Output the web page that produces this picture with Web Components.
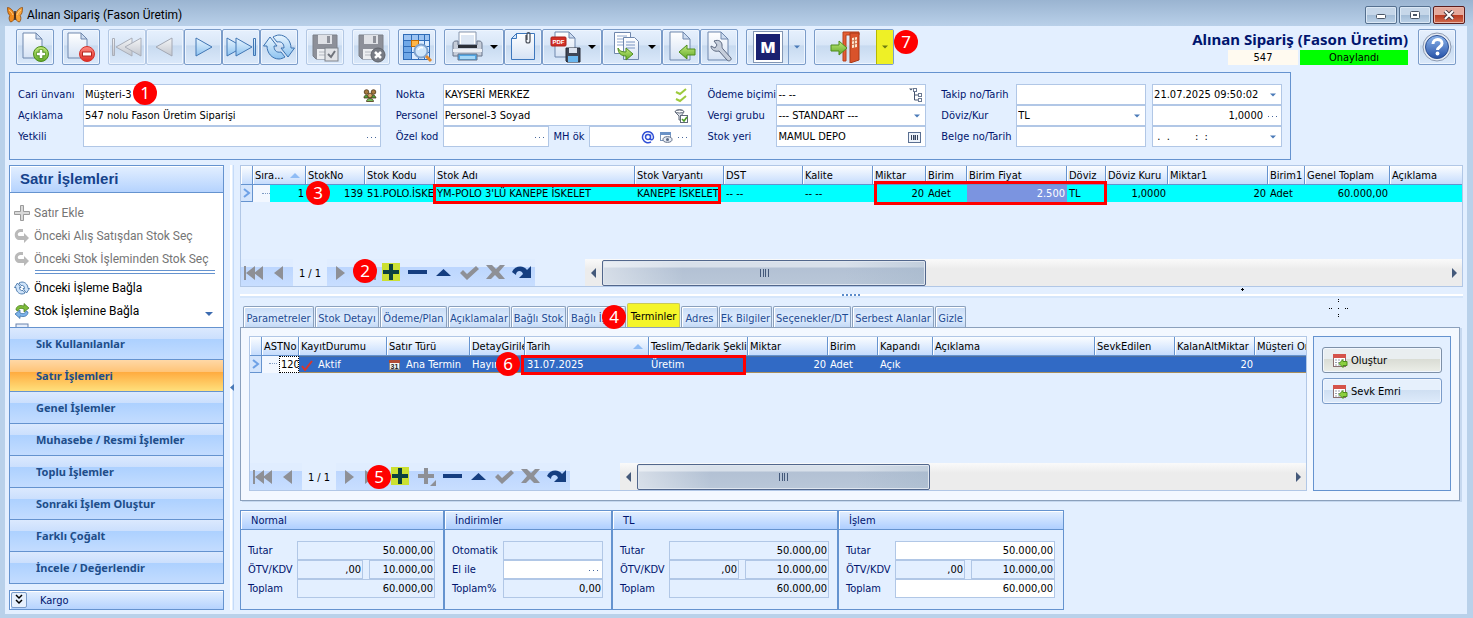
<!DOCTYPE html>
<html lang="tr">
<head>
<meta charset="utf-8">
<title>Alınan Sipariş (Fason Üretim)</title>
<style>
  body { margin: 0; background: #b9d1ea; }
</style>
</head>
<body>
<order-window></order-window>
<script>
const BASE = `
  *, *::before, *::after { box-sizing: border-box; }
  button, input, select { font: inherit; color: inherit; margin: 0; padding: 0; border: 0; background: none; border-radius: 0; outline: none; }
  button { cursor: default; }
  svg { display: block; }
`;
const define = (tag, css, render) => customElements.define(tag, class extends HTMLElement {
  constructor() {
    super();
    this.attachShadow({ mode: 'open' });
  }
  connectedCallback() {
    this.shadowRoot.innerHTML = `<style>${BASE}${css}</style>${render(this)}`;
  }
});
const attr = (el, name, fallback = '') => el.getAttribute(name) ?? fallback;

/* ---------- icons ---------- */
const grad = (id, a, b) => `<linearGradient id="${id}" x1="0" y1="0" x2="0" y2="1"><stop offset="0" stop-color="${a}"/><stop offset="1" stop-color="${b}"/></linearGradient>`;
const page = (x, y, w, h, f = 6) => `<path d="M${x} ${y}h${w - f}l${f} ${f}v${h - f}h${-w}z" fill="url(#pg)" stroke="#6f87ad"/><path d="M${x + w - f} ${y}v${f}h${f}z" fill="#cddcf0" stroke="#6f87ad" stroke-linejoin="round"/>`;
const pg = `<defs>${grad('pg', '#ffffff', '#d5e2f4')}${grad('bl', '#eaf6ff', '#8cc2f0')}${grad('gr', '#f4f5f7', '#c2c6ce')}${grad('gn', '#c3ea7c', '#5fa826')}${grad('rd', '#ff8d84', '#e02a22')}</defs>`;
const floppy = (c, d) => `<path d="M2 2h24v24H5l-3-3z" fill="${c}" stroke="${d}"/><rect x="7" y="2" width="14" height="9" fill="#dfe1e6"/><rect x="16" y="3" width="3" height="7" fill="${c}"/><rect x="6" y="16" width="16" height="10" fill="#eceef1"/><path d="M8 19h12M8 22h12" stroke="#b4b8c0"/>`;
const ICONS = {
  butterfly: [16, `<path d="M7.500 7C6 3 3 .5.500.500c0 4 .5 7 2.500 8-1.500 1.500-1 5 .5 6.500C6 15 7.500 12 7.500 9.500z" fill="#f08a1c" stroke="#8a4a12" stroke-width=".8"/><path d="M8.500 7C10 3 13 .5 15.500.500c0 4-.5 7-2.500 8 1.500 1.500 1 5-.5 6.500C10 15 8.500 12 8.500 9.500z" fill="#f7a338" stroke="#8a4a12" stroke-width=".8"/><path d="M2 3c2 1 3 3 4 5M14 3c-2 1-3 3-4 5" stroke="#ffd08a" fill="none"/><path d="M8 4v9" stroke="#3a2010" stroke-width="1.500"/>`],
  docAdd: [32, pg + page(4, 2, 19, 25) + `<circle cx="22" cy="23" r="7.500" fill="url(#gn)" stroke="#4b8a1c"/><path d="M22 18.500v9M17.500 23h9" stroke="#4b8a1c" stroke-width="4.600"/><path d="M22 19v8M18 23h8" stroke="#fff" stroke-width="2.600"/>`],
  docDel: [32, pg + page(3, 2, 19, 25) + `<circle cx="22" cy="23" r="7.500" fill="url(#rd)" stroke="#d3322b"/><rect x="17.500" y="21" width="9" height="4" fill="#fff" stroke="#b32720"/>`],
  first: [32, pg + `<g fill="url(#gr)" stroke="#a9aeb9" stroke-linejoin="round"><path d="M1.500 7.500h2v17h-2z"/><path d="M21 7v18L5 16z"/><path d="M30 7v18l-16-9z"/></g>`],
  prev: [32, pg + `<path d="M23 7v18L7 16z" fill="url(#gr)" stroke="#a3a8b4" stroke-linejoin="round"/>`],
  next: [32, pg + `<path d="M9 7v18l16-9z" fill="url(#bl)" stroke="#4176b4" stroke-linejoin="round"/>`],
  last: [32, pg + `<g fill="url(#bl)" stroke="#4176b4" stroke-linejoin="round"><path d="M2 7v18l16-9z"/><path d="M11 7v18l16-9z"/><path d="M28.500 7.500h2v17h-2z"/></g>`],
  refresh: [32, pg + `<g fill="url(#bl)" stroke="#3c72b0" stroke-linejoin="round"><path d="M7 6l-6.500 9H4c0 7 5 13 12 13 2 0 4-1 6-2l-4-5c-5 1-7-2-7-6h3z"/><path d="M25 26l6.500-9H28c0-7-5-13-12-13-2 0-4 1-6 2l4 5c5-1 7 2 7 6h-3z"/></g>`],
  saveOk: [32, `<g transform="translate(2 2)">${floppy('#8d9099', '#7c8089')}</g><rect x="16" y="17" width="13" height="13" fill="#e1e3e7" stroke="#7f838b"/><path d="M19 23l3 3 4-6" stroke="#6f737b" stroke-width="2" fill="none"/>`],
  saveNo: [32, `<g transform="translate(2 2)">${floppy('#8d9099', '#7c8089')}</g><circle cx="23" cy="24" r="7" fill="#777b84" stroke="#5f636b"/><path d="M20 21l6 6M26 21l-6 6" stroke="#fff" stroke-width="2.500"/>`],
  search: [32, `<rect x="2.500" y="3.500" width="26" height="25" fill="#dcecff" stroke="#2f6cb8"/><path d="M3 4h25v5H3z" fill="#9cc3f2"/><path d="M3 9h7v19H3z" fill="#6fa8e8"/><path d="M3 9.500h25M3 15.500h25M3 21.500h25M10.500 4v24M17.500 4v24M23.500 4v24" stroke="#2f6cb8"/><rect x="10.500" y="9.500" width="7" height="6" fill="#ffb648" stroke="#c46b00"/><circle cx="20" cy="20" r="6.500" fill="#cfe6fb" stroke="#7fa3cf" stroke-width="2"/><path d="M25 25l5 5" stroke="#e08a30" stroke-width="3"/><path d="M17 19c1-2 3-3 5-2" stroke="#fff" fill="none" stroke-width="1.500"/>`],
  print: [32, pg + `<path d="M7 1h17v13H7z" fill="#fff" stroke="#8796ae"/><path d="M9 4h13v9H9z" fill="#dde7f4"/><path d="M1 13c0-2 1-3 3-3h2v4h19v-4h2c2 0 3 1 3 3v12H1z" fill="#c6cdd9" stroke="#68748a"/><path d="M6 14h19v3H6z" fill="#2b2f38"/><path d="M1 18h29v3H1z" fill="#edf0f5"/><path d="M6 23h19v6H6z" fill="#51a7e4" stroke="#68748a"/><path d="M8 25h15v3H8z" fill="#a6d8f8"/>`],
  note: [32, pg + `<path d="M4.500 7.500l5-5h18v26h-23z" fill="url(#pg)" stroke="#3d77bd"/><path d="M4.500 7.500h5v-5z" fill="#d6e7fa" stroke="#3d77bd"/><path d="M19 4v6a2 2 0 004 0V3a1.500 1.500 0 00-3 0v6" fill="none" stroke="#4a4f59" stroke-width="1.200"/>`],
  pdf: [32, pg + page(5, 1, 20, 25) + `<rect x="1" y="6" width="15" height="9" rx="1" fill="#d22f27" stroke="#a9201a"/><text x="8.500" y="13" text-anchor="middle" font-family="Liberation Sans, sans-serif" font-size="6" font-weight="700" fill="#fff">PDF</text><path d="M16 17h14v14H17l-1-1z" fill="#3f4656" stroke="#262b37"/><rect x="19" y="17" width="8" height="5" fill="#dbe2ee"/><rect x="18" y="25" width="10" height="6" fill="#6cb7ee"/>`],
  copy: [32, pg + `<path d="M4.500 1.500h16v21h-16z" fill="#fff" stroke="#6f87ad"/><path d="M7 5h10M7 8h10M7 11h8M7 14h8" stroke="#8ea6cc"/><path d="M13.500 6.500h11l4 4v18h-15z" fill="url(#pg)" stroke="#6f87ad"/><path d="M16 11h9M16 14h9M16 17h9" stroke="#7994c2"/><path d="M8 17c1 3 4 4 8 4v-4l7 6-7 6v-4C11 25 8 22 8 17z" fill="url(#gn)" stroke="#4e8d1d"/>`],
  docBack: [32, pg + page(5, 1, 20, 28, 7) + `<path d="M14 21l8-7v4h8v6h-8v4z" fill="url(#gn)" stroke="#4e8d1d" stroke-linejoin="round"/>`],
  docTool: [32, pg + page(5, 1, 20, 28, 7) + `<path d="M8 15l4 2 2-3-3-4c5-2 8 1 8 4 0 2 0 3 1 4l8 9c1 2-2 4-4 2l-8-9c-4 1-8-1-8-5z" fill="#c6cedb" stroke="#5c6880" stroke-linejoin="round"/>`],
  logoM: [32, `<rect x="1.500" y=".5" width="29" height="31" fill="#fff" stroke="#8296b4"/><rect x="4" y="3" width="24" height="26" fill="#1a2170"/><text x="16" y="22" text-anchor="middle" font-family="Open Sans, sans-serif" font-weight="800" font-size="16" fill="#fff">M</text>`],
  exit: [32, pg + `<path d="M13 1h16v3H16v26h-3z" fill="#e45d33" stroke="#b6401d"/><path d="M20 2h9v27l-9 3z" fill="#d9532b" stroke="#a93a18"/><path d="M22 7l5-1v10l-5 1z" fill="#fde3cb"/><path d="M24.500 6v11M22 10l5-1M22 13.500l5-1" stroke="#c8714e"/><path d="M1 14h8v-4l8 7-8 7v-4H1z" fill="url(#gn)" stroke="#4e8d1d" stroke-linejoin="round"/>`],
  help: [32, `<defs>${grad('hp', '#8db6ec', '#2752a8')}</defs><circle cx="16" cy="16" r="14" fill="#e6ebf3" stroke="#8b99b0"/><circle cx="16" cy="16" r="11.500" fill="url(#hp)" stroke="#2c4f92"/><path d="M12 13c0-6 9-6 9-.5 0 3.500-4.500 3.500-4.500 6.500" fill="none" stroke="#fff" stroke-width="3"/><circle cx="16.500" cy="22.500" r="1.900" fill="#fff"/>`],
  down: [8, `<path d="M1 2.500h6L4 5.500z" fill="currentColor"/>`],
  bigDown: [8, `<path d="M0 2h8L4 6z" fill="currentColor"/>`],
  dots: [12, `<path d="M1 6.500h1M5 6.500h1M9 6.500h1" stroke="#46679c"/>`],
  people: [16, `<g stroke="#4a3213" stroke-width=".8"><path d="M2 11c0-4 4-4 5 0zM9 11c0-4 4-4 5 0z" fill="#4fa33c"/><circle cx="4.500" cy="5" r="2.300" fill="#a5793f"/><circle cx="11.500" cy="5" r="2.300" fill="#a5793f"/><path d="M4.500 14.500c0-4 7-4 7 0z" fill="#73c05c"/><circle cx="8" cy="8.500" r="2.300" fill="#d8a468"/></g>`],
  checks: [16, `<path d="M3 5l4 2 6-5M3 12l4 2 6-5" stroke="#9dca3c" stroke-width="2" fill="none"/>`],
  filter: [16, `<path d="M2 4c0-3 9-3 9 0L8 8v4H6V8z" fill="#dfe3ea" stroke="#616a7a"/><ellipse cx="6.500" cy="3.500" rx="4" ry="1.500" fill="#fff" stroke="#616a7a"/><rect x="7.500" y="7.500" width="7" height="7" fill="#fff" stroke="#616a7a"/><path d="M9 11l2 2 3-4" stroke="#4c9b23" stroke-width="1.600" fill="none"/>`],
  at: [14, `<path d="M9.500 4.500v4c0 2 3 2 3-1.500a5.500 5.500 0 10-2.500 4.800M9.500 7a2.500 2.500 0 11-5 0 2.500 2.500 0 015 0z" fill="none" stroke="#2f4fd6" stroke-width="1.500"/>`],
  eye: [14, `<rect x="1.500" y="2.500" width="10" height="8" fill="#fff" stroke="#7d97bb"/><path d="M1 2h11v3H1z" fill="#6c93c6"/><ellipse cx="8.500" cy="9.500" rx="4.500" ry="2.800" fill="#e6ecf5" stroke="#5d6b84"/><circle cx="8.500" cy="9.500" r="1.500" fill="#5d6b84"/>`],
  tree: [16, `<path d="M7.500 4v9H11M7.500 8H11" stroke="#44536d" fill="none"/><path d="M2 1.500h4l-2 2z" fill="#44536d"/><rect x="6.500" y="1.500" width="3" height="3" fill="#fff" stroke="#6b7992"/><rect x="11.500" y="6.500" width="3" height="3" fill="#fff" stroke="#6b7992"/><rect x="11.500" y="11.500" width="3" height="3" fill="#fff" stroke="#6b7992"/>`],
  barcode: [16, `<rect x="1.500" y="3.500" width="12" height="10" fill="#eef3fa" stroke="#5a6f92"/><path d="M4.500 6v5M6.500 6v5M8.500 6v5M10.500 6v5" stroke="#35425c"/><path d="M7.500 6v5" stroke="#8a97ad"/>`],
  cross: [16, `<path d="M6.500.500h3v6h6v3h-6v6h-3v-6h-6v-3h6z" fill="#d9d9d9" stroke="#9b9b9b"/>`],
  back: [16, `<path d="M10 5l5 5-5 5v-3H6C-1 12-1 2 6 1h3v3H6c-3 1-3 4 0 4h4z" fill="#b9b9b9"/>`],
  link: [16, `<g fill="#cfe4fa" stroke="#33679f" stroke-width=".8" stroke-linejoin="round"><path d="M3.500 3L.500 7.500H2C2 11 4.500 14 8 14c1 0 2-.5 3-1l-2-2.500c-2.500.5-3.500-1-3.500-3H7z"/><path d="M12.500 13l3-4.500H14C14 5 11.500 2 8 2 7 2 6 2.500 5 3l2 2.500c2.500-.5 3.500 1 3.500 3H9z"/></g>`],
  swap: [16, `<path d="M2 7c0-4 4-5.500 8-4V.500L15 5l-5 4V6C7 5 5 5 4 8z" fill="#7dbb3a" stroke="#467a1a" stroke-width=".7"/><path d="M14 9c0 4-4 5.500-8 4v2.500L1 11l5-4v3c3 1 5 1 6-2z" fill="#7db3ea" stroke="#2f659f" stroke-width=".7"/>`],
  sheet: [16, `<rect x="2" y="2" width="12" height="12" fill="#e7eefa" stroke="#6a83ad"/>`],
  expand: [12, `<path d="M3 1l3 3 3-3M3 6l3 3 3-3" stroke="#000" stroke-width="1.500" fill="none"/>`],
  nFirst: [20, `<path d="M0 3h2v14H0zM11 3v14l-9-7zM19 3v14l-9-7z" fill="#8e9096"/>`],
  nPrev: [20, `<path d="M13 3v14l-9-7z" fill="#8e9096"/>`],
  nNext: [20, `<path d="M6 3v14l9-7z" fill="#8e9096"/>`],
  nLast: [20, `<path d="M0 3v14l9-7zM9 3v14l9-7zM18 3h2v14h-2z" fill="#8e9096"/>`],
  nPlus: [20, `<rect x="0" y="0" width="18" height="18" fill="#cbe032"/><path d="M7 1h4v6h6v4h-6v6H7v-6H1V7h6z" fill="#0c4040"/>`],
  nAdd: [20, `<path d="M7 1h4v6h6v4h-6v6H7v-6H1V7h6z" fill="#8e9096"/><path d="M19 13v6h-6z" fill="#8e9096"/>`],
  nMinus: [20, `<path d="M0 7h19v4H0z" fill="#153e80"/>`],
  nUp: [20, `<path d="M2 13h15L9.500 6z" fill="#153e80"/>`],
  nOk: [20, `<path d="M0 10l3-3 4 4 9-8 3 3L7 17z" fill="#8e9096"/>`],
  nNo: [20, `<path d="M0 2h6l4 4 4-4h5l-6 7 6 7h-6l-4-4-4 4H0l6-7z" fill="#8e9096"/>`],
  nRedo: [20, `<path d="M0 9C3 2 12 2 15 7l4-4v12H7l4-4C10 7 4 7 4 12z" fill="#153e80"/>`],
  sort: [10, `<path d="M0 7h10L5 2z" fill="#8fbcf5"/>`],
  row: [12, `<path d="M3 2l5 4-5 4" stroke="#6ea1e6" stroke-width="2" fill="none"/>`],
  tick: [12, `<path d="M1 7l3 4 7-9" stroke="#d8362c" stroke-width="2" fill="none"/>`],
  cal: [12, `<rect x=".5" y="1.500" width="10" height="9" fill="#f5f5f5" stroke="#8a8a8a"/><path d="M0 1h11v3H0z" fill="#b04a35"/><text x="5.500" y="10" text-anchor="middle" font-family="Liberation Sans, sans-serif" font-size="7" font-weight="700" fill="#222">31</text>`],
  calBack: [16, `<rect x="1.500" y="2.500" width="12" height="12" fill="#fff" stroke="#8a6f6f"/><path d="M1 2h13v4H1z" fill="#d5534a"/><path d="M3 8h9M3 10.500h9M3 13h9" stroke="#9aa1ad" stroke-dasharray="2 1"/><path d="M7 11.500l4-4v2h4v4h-4v2z" fill="#8ccf3f" stroke="#4e8d1d"/>`],
  left: [10, `<path d="M7 0v10L2 5z" fill="#44597a"/>`],
  right: [10, `<path d="M3 0v10l5-5z" fill="#44597a"/>`],
};
define('ui-icon', `:host { display: block; flex: none; line-height: 0; }`, el => {
  const [box, body] = ICONS[attr(el, 'name')];
  return `<svg width="${box}" height="${box}" viewBox="0 0 ${box} ${box}" aria-hidden="true">${body}</svg>`;
});

/* ---------- title bar ---------- */
define('title-bar', `
  :host { display: flex; align-items: center; gap: 4px; height: 26px; padding: 3px 8px 0 7px; background: linear-gradient(#9ab4d1, #b9d0e9); color: #000; }
  .t { flex: 1; white-space: nowrap; font: var(--title-font); }
  .w { display: flex; gap: 2px; }
  button { width: 32px; height: 18px; border: 1px solid #55708f; border-radius: 2px; box-shadow: inset 0 0 0 1px #dbe8f5; background: linear-gradient(#c6d7e9 50%, #a2bcd6 50%, #bdd2e8); display: grid; place-items: center; }
  .x { border-color: #5b1d1d; background: linear-gradient(#e4a99c 50%, #b9391f 50%, #d06a4e); box-shadow: inset 0 0 0 1px #e9b5a8; }
`, () => `
  <ui-icon name="butterfly"></ui-icon>
  <span class="t">Alınan Sipariş (Fason Üretim)</span>
  <span class="w">
    <button aria-label="Simge durumuna küçült"><svg width="12" height="10"><rect x="1.500" y="4.500" width="9" height="4" rx="1" fill="#fff" stroke="#4a5666"/></svg></button>
    <button aria-label="Ekranı kapla"><svg width="12" height="10"><rect x="1.500" y="1.500" width="9" height="7" rx="1" fill="#fff" stroke="#4a5666"/><rect x="4.500" y="4.500" width="3" height="1" fill="#fff" stroke="#4a5666"/></svg></button>
    <button class="x" aria-label="Kapat"><svg width="12" height="10"><path d="M2 1l8 8M10 1l-8 8" stroke="#4a3a40" stroke-width="4"/><path d="M2 1l8 8M10 1l-8 8" stroke="#fff" stroke-width="2"/></svg></button>
  </span>`);

/* ---------- toolbar ---------- */
define('tool-button', `
  :host { display: block; }
  .b { display: flex; height: 36px; border: 1px solid #7b9cc9; border-radius: 2px; background: linear-gradient(#e6f0fd, #d8e6f7 45%, #c7daf0 46%, #dbe9fa); box-shadow: inset 0 0 0 1px #eef5fe; }
  button { flex: 1; display: flex; align-items: center; justify-content: center; }
  button.main { width: var(--w, 36px); }
  .arrow { flex: none; width: 17px; color: #000; }
  .split .arrow { border-left: 1px solid #7b9cc9; color: #4a7ab8; }
  .dim { border-color: #b3c8e4; }
  .hot .arrow { background: #eef026; border-left-color: #b8b800; color: #6b7a10; }
  .both { gap: 6px; padding-left: 2px; }
`, el => {
  const m = attr(el, 'menu');
  const cls = ['b', el.hasAttribute('dim') ? 'dim' : '', m === 'split' || m === 'hot' ? 'split' : '', m === 'hot' ? 'hot' : ''].join(' ');
  const icon = `<ui-icon name="${attr(el, 'icon')}"></ui-icon>`;
  if (m === 'inline') return `<div class="${cls}"><button class="main both" aria-label="${attr(el, 'label')}" style="--w:${attr(el, 'w')}px">${icon}<ui-icon name="bigDown"></ui-icon></button></div>`;
  return `<div class="${cls}"><button class="main" ${el.hasAttribute('dim') ? 'disabled' : ''} aria-label="${attr(el, 'label')}" style="--w:${attr(el, 'w', 36)}px">${icon}</button>${m ? `<button class="arrow" aria-label="${attr(el, 'label')} menüsü"><ui-icon name="down"></ui-icon></button>` : ''}</div>`;
});
define('tool-bar', `
  :host { display: flex; align-items: flex-start; padding: 3px 11px 0 11px; gap: 8px; height: 46px; }
  .g { display: flex; flex: none; }
  .id { flex: none; margin-left: auto; display: grid; grid-template-columns: 70px 108px; gap: 0 2px; text-align: center; color: #000; justify-content: end; padding-right: 2px; }
  h1 { grid-column: 1 / -1; margin: 0; justify-self: end; font: var(--h1-font); color: #00156e; white-space: nowrap; width: max-content; }
  .no, .ok { line-height: 15px; }
  .no { background: #fffaf0; }
  .ok { background: #00ff00; }
`, () => `
  <div class="g"><tool-button icon="docAdd" label="Yeni"></tool-button></div>
  <div class="g"><tool-button icon="docDel" label="Sil"></tool-button></div>
  <div class="g"><tool-button dim icon="first" label="İlk"></tool-button><tool-button dim icon="prev" label="Önceki"></tool-button><tool-button icon="next" label="Sonraki"></tool-button><tool-button icon="last" label="Son"></tool-button><tool-button icon="refresh" label="Yenile"></tool-button></div>
  <div class="g"><tool-button dim icon="saveOk" label="Kaydet"></tool-button></div>
  <div class="g"><tool-button dim icon="saveNo" label="Vazgeç"></tool-button></div>
  <div class="g"><tool-button icon="search" label="Ara"></tool-button></div>
  <div class="g"><tool-button icon="print" label="Yazdır" menu="inline" w="58"></tool-button><tool-button icon="note" label="Ek dosya"></tool-button><tool-button icon="pdf" label="PDF" menu="inline" w="58"></tool-button><tool-button icon="copy" label="Kopyala" menu="inline" w="58"></tool-button><tool-button icon="docBack" label="Al"></tool-button><tool-button icon="docTool" label="Araçlar"></tool-button></div>
  <div class="g"><tool-button icon="logoM" label="M" menu="split" w="41"></tool-button></div>
  <div class="g"><tool-button icon="exit" label="Çıkış" menu="hot" w="61"></tool-button></div>
  <div class="id"><h1>Alınan Sipariş (Fason Üretim)</h1><span class="no">547</span><span class="ok">Onaylandı</span></div>
  <div class="g"><tool-button icon="help" label="Yardım"></tool-button></div>`);

/* ---------- form fields ---------- */
define('form-field', `
  :host { display: flex; height: var(--fh, 21px); min-width: 0; color: #00156e; }
  label { flex: none; width: var(--lw, 0px); line-height: var(--fh, 21px); white-space: nowrap; }
  .box { flex: 1; min-width: 0; display: flex; align-items: center; gap: 4px; border: 1px solid #b1c7e6; background: #fff; color: #000; padding: 0 2px 0 1px; }
  input, select { flex: 1; min-width: 0; width: 10px; height: 100%; appearance: none; }
  .num input { text-align: right; }
  .ro .box { background: #e3efff; }
  .down { color: #4a7ab8; margin-right: 2px; }
  .wrap { display: flex; flex: 1; min-width: 0; }
  .tot .box { padding-right: 1px; }
`, el => {
  const name = attr(el, 'label'), v = attr(el, 'value');
  const icons = attr(el, 'icons').split(' ').filter(Boolean).map(i => `<ui-icon class="${i}" name="${i}"></ui-icon>`).join('');
  const cls = ['wrap', el.hasAttribute('num') ? 'num' : '', el.hasAttribute('ro') ? 'ro' : '', el.hasAttribute('tot') ? 'tot' : ''].join(' ');
  const ctl = el.hasAttribute('select') ? `<select id="f"><option>${v}</option></select>` : `<input id="f" value="${v}" ${el.hasAttribute('ro') ? 'readonly' : ''} ${name ? '' : `aria-label="${attr(el, 'hint')}"`}>`;
  return `<div class="${cls}">${name ? `<label for="f">${name}</label>` : ''}<span class="box">${ctl}${icons}</span></div>`;
});
define('order-form', `
  :host { display: grid; grid-template-columns: 363fr 297fr 219fr 341fr; gap: 15px; max-width: 1282px; margin: 0 0 0 4px; padding: 11px 8px 12px; border: 1px solid #6593cf; }
  .c { display: grid; grid-template-rows: repeat(3, 21px); min-width: 0; }
  .r { display: flex; min-width: 0; }
`, () => `
  <div class="c" style="--lw:65px">
    <form-field label="Cari ünvanı" value="Müşteri-3" icons="people"></form-field>
    <form-field label="Açıklama" value="547 nolu Fason Üretim Siparişi"></form-field>
    <form-field label="Yetkili" icons="dots"></form-field>
  </div>
  <div class="c" style="--lw:47px">
    <form-field label="Nokta" value="KAYSERİ MERKEZ" icons="checks"></form-field>
    <form-field label="Personel" value="Personel-3 Soyad" icons="filter"></form-field>
    <div class="r" style="gap:5px"><form-field label="Özel kod" icons="dots" style="flex:153"></form-field><form-field label="MH ök" icons="at eye dots" style="--lw:35px;flex:139"></form-field></div>
  </div>
  <div class="c" style="--lw:69px">
    <form-field label="Ödeme biçimi" value="-- --" icons="tree"></form-field>
    <form-field label="Vergi grubu" value="--- STANDART ---" select icons="down"></form-field>
    <form-field label="Stok yeri" value="MAMUL DEPO" icons="barcode"></form-field>
  </div>
  <div class="c" style="--lw:75px">
    <div class="r" style="gap:6px"><form-field label="Takip no/Tarih" style="flex:205"></form-field><form-field value="21.07.2025 09:50:02" hint="Takip tarihi" icons="down" style="flex:130"></form-field></div>
    <div class="r" style="gap:6px"><form-field label="Döviz/Kur" value="TL" select icons="down" style="flex:205"></form-field><form-field num value="1,0000" hint="Kur" icons="dots" style="flex:130"></form-field></div>
    <div class="r" style="gap:6px"><form-field label="Belge no/Tarih" style="flex:205"></form-field><form-field value=" .  .        :  :" hint="Belge tarihi" icons="down" style="flex:130"></form-field></div>
  </div>`);

/* ---------- left navigation ---------- */
define('side-nav', `
  :host { display: flex; flex-direction: column; gap: 6px; width: 215px; flex: none; }
  .p { border: 1px solid #6593cf; background: #fff; display: flex; flex-direction: column; }
  h2 { margin: 0; height: 27px; padding-left: 10px; border-bottom: 1px solid #6593cf; background: linear-gradient(#e3efff, #b5d3fe); box-shadow: inset 1px 1px #fff; font: bold 15px/26px "Liberation Sans", sans-serif; color: #15428b; }
  .l { position: relative; height: 134px; padding: 8px 0 0 4px; overflow: hidden; font: var(--item-font); color: #000; }
  .l a { display: flex; align-items: center; gap: 4px; height: 23px; color: inherit; text-decoration: none; white-space: nowrap; }
  .l .off { color: #757575; }
  hr { margin: 0 8px 2px 21px; height: 4px; border: solid #6593cf; border-width: 1px 0; }
  .more { position: absolute; right: 10px; bottom: 9px; color: #3c6bb0; }
  .n button { display: block; width: 100%; height: 32px; padding: 0 0 0 26px; border-top: 1px solid #6593cf; text-align: left; background: linear-gradient(#dbe9fe, #cbdffd 36%, #add1ff 37%, #c3dcff); font: var(--nav-font); color: #204d89; }
  .n .on { background: linear-gradient(#ffd8a6, #ffc477 38%, #ffab3f 39%, #ffe07c); }
  .k { display: flex; align-items: center; gap: 13px; height: 20px; border: 1px solid #6593cf; background: linear-gradient(#e3efff, #b5d3fe); box-shadow: inset 1px 1px #fff; color: #00156e; padding-left: 1px; }
  .k button { width: 16px; height: 16px; border: 1px solid #7b9cc9; border-radius: 2px; background: #e6f0fd; display: grid; place-items: center; }
`, () => `
  <div class="p">
    <h2>Satır İşlemleri</h2>
    <div class="l">
      <a class="off" href="#"><ui-icon name="cross"></ui-icon>Satır Ekle</a>
      <a class="off" href="#"><ui-icon name="back"></ui-icon>Önceki Alış Satışdan Stok Seç</a>
      <a class="off" href="#"><ui-icon name="back"></ui-icon>Önceki Stok İşleminden Stok Seç</a>
      <hr>
      <a href="#"><ui-icon name="link"></ui-icon>Önceki İşleme Bağla</a>
      <a href="#"><ui-icon name="swap"></ui-icon>Stok İşlemine Bağla</a>
      <ui-icon name="sheet"></ui-icon>
      <ui-icon class="more" name="bigDown"></ui-icon>
    </div>
    <nav class="n">${['Sık Kullanılanlar', 'Satır İşlemleri', 'Genel İşlemler', 'Muhasebe / Resmi İşlemler', 'Toplu İşlemler', 'Sonraki İşlem Oluştur', 'Farklı Çoğalt', 'İncele / Değerlendir'].map((t, i) => `<button class="${i === 1 ? 'on' : ''}">${t}</button>`).join('')}</nav>
  </div>
  <div class="k"><button aria-label="Genişlet"><ui-icon name="expand"></ui-icon></button>Kargo</div>`);

/* ---------- data grid ---------- */
const GRIDS = {
  lines: [['Sıra...', 53, '1', 'num tree sorted'], ['StokNo', 59, '139', 'num'], ['Stok Kodu', 70, '51.POLO.İSKE'], ['Stok Adı', 200, "YM-POLO 3'LÜ KANEPE İSKELET"], ['Stok Varyantı', 89, 'KANEPE İSKELETİ'], ['DST', 79, '-- --'], ['Kalite', 70, '-- --'], ['Miktar', 53, '20', 'num'], ['Birim', 41, 'Adet'], ['Birim Fiyat', 100, '2.500', 'num focus'], ['Döviz', 39, 'TL'], ['Döviz Kuru', 62, '1,0000', 'num'], ['Miktar1', 100, '20', 'num'], ['Birim1', 37, 'Adet'], ['Genel Toplam', 85, '60.000,00', 'num'], ['Açıklama', 0, '']],
  terms: [['ASTNo', 37, '120', 'edit'], ['KayıtDurumu', 88, '<ui-icon name="tick"></ui-icon>Aktif', 'pic'], ['Satır Türü', 83, '<ui-icon name="cal"></ui-icon>Ana Termin', 'pic'], ['DetayGirile', 55, 'Hayır'], ['Tarih', 124, '31.07.2025', 'sorted'], ['Teslim/Tedarik Şekli', 99, 'Üretim'], ['Miktar', 80, '20', 'num'], ['Birim', 50, 'Adet'], ['Kapandı', 55, 'Açık'], ['Açıklama', 162, ''], ['SevkEdilen', 80, ''], ['KalanAltMiktar', 80, '20', 'num'], ['Müşteri Or', 0, '']],
};
define('data-grid', `
  :host { display: flex; flex-direction: column; min-width: 0; border: 1px solid #b1c7e6; background: #e3efff; color: #000; }
  .v { flex: 1; overflow: hidden; }
  table { table-layout: fixed; width: 100%; border-collapse: separate; border-spacing: 0; }
  th, td { padding: 0 0 0 2px; overflow: hidden; white-space: nowrap; text-align: left; font-weight: normal; }
  th { height: 19px; padding-top: 2px; line-height: 16px; border-right: 1px solid #6593cf; border-bottom: 1px solid #6593cf; background: linear-gradient(#fbfdff, #c5dcfd); box-shadow: inset 1px 0 #fff; }
  th:last-child { border-right: 0; }
  td { height: 17px; padding-top: 1px; line-height: 16px; background: var(--row-bg); color: var(--row-fg); }
  .sorted > div { display: flex; justify-content: space-between; align-items: center; padding-right: 5px; }
  td.num { text-align: right; padding-right: 2px; }
  td.mark, th.mark { padding: 0; }
  td.mark { border-right: 1px solid #6593cf; border-bottom: 1px solid #6593cf; background: #d3e4fc; }
  td.tree { background: linear-gradient(90deg, #f2f7ff 17px, var(--row-bg) 17px); }
  td.edit { background: #f2f7ff; padding: 0; color: #000; }
  .tree > div, td.edit > div { display: flex; justify-content: space-between; }
  .tree > div::before, .edit > div::before { content: ""; flex: none; width: 8px; height: 8px; margin-left: 7px; border-bottom: 1px dotted #7f9bc4; }
  td.edit span { flex: 1; margin-left: 2px; overflow: hidden; background: #fff; border: 1px dotted #000; line-height: 15px; padding-left: 1px; }
  td.focus { background: #7b94e0; color: #fff; }
  td.pic > div { display: flex; align-items: center; gap: 5px; height: 16px; }
  :host([dotted]) td:not(.mark, .edit) { box-shadow: inset 0 1px #4d6fa0, inset 0 -1px #a98f5c; }
`, el => {
  const cols = GRIDS[attr(el, 'source')];
  const cell = (v, k) => /edit/.test(k) ? `<div><span>${v}</span></div>` : /tree|pic/.test(k) ? `<div>${v}</div>` : v;
  return `<div class="v"><table><colgroup><col style="width:12px">${cols.map(c => `<col${c[1] ? ` style="width:${c[1]}px"` : ''}>`).join('')}</colgroup>
    <thead><tr><th class="mark"></th>${cols.map(([t, , , k = '']) => `<th scope="col" class="${/sorted/.test(k) ? 'sorted' : ''}">${/sorted/.test(k) ? `<div>${t}<ui-icon name="sort"></ui-icon></div>` : t}</th>`).join('')}</tr></thead>
    <tbody><tr><td class="mark"><ui-icon name="row"></ui-icon></td>${cols.map(([, , v, k = '']) => `<td class="${k.replace('sorted', '')}">${cell(v, k)}</td>`).join('')}</tr></tbody></table></div><slot></slot>`;
});
define('grid-footer', `
  :host { display: flex; height: 27px; }
  .n { display: flex; flex: none; margin-right: 50px; }
  .n button { width: 26px; height: 27px; display: grid; place-items: center; background: linear-gradient(#e0edff 8px, #bcd6fe 8px, #c8deff); }
  .n span { width: 34px; text-align: center; line-height: 29px; background: #e3efff; color: #000; }
  .s { flex: 1; display: flex; align-items: center; background: linear-gradient(#fafafa, #ececec 10px); }
  .s .a { width: 17px; height: 27px; display: grid; place-items: center; }
  .s .t { width: var(--thumb, 324px); height: 26px; border: 1px solid #52678c; border-radius: 2px; box-shadow: inset 0 0 0 1px #dfe6ef; background: linear-gradient(90deg, rgba(255,255,255,.45), rgba(255,255,255,0) 25%, rgba(255,255,255,0) 75%, rgba(160,180,200,.4)), linear-gradient(#d8e0ea 6px, #b3c1d4 7px, #b9c7d8); display: grid; place-items: center; }
  .sp { flex: 1; }
`, el => {
  const names = { nFirst: 'İlk', nPrev: 'Önceki', nNext: 'Sonraki', nLast: 'Son', nPlus: 'Ekle', nAdd: 'Alt ekle', nMinus: 'Sil', nUp: 'Düzenle', nOk: 'Onayla', nNo: 'Vazgeç', nRedo: 'Yenile' };
  const b = n => `<button aria-label="${names[n]}"><ui-icon name="${n}"></ui-icon></button>`;
  const rest = ['nNext', 'nLast', 'nPlus', ...(el.hasAttribute('sub') ? ['nAdd'] : []), 'nMinus', 'nUp', 'nOk', 'nNo', 'nRedo'];
  return `<div class="n">${b('nFirst')}${b('nPrev')}<span>1 / 1</span>${rest.map(b).join('')}</div>
  <div class="s"><button class="a" aria-label="Sola kaydır"><ui-icon name="left"></ui-icon></button><div class="t"><svg width="9" height="8"><path d="M.5 0v8M3.500 0v8M5.500 0v8M8.500 0v8" stroke="#44597a"/></svg></div><span class="sp"></span><button class="a" aria-label="Sağa kaydır"><ui-icon name="right"></ui-icon></button></div>`;
});

/* ---------- detail tabs ---------- */
define('detail-tabs', `
  :host { display: flex; flex-direction: column; }
  .bar { display: flex; gap: 1px; align-items: flex-end; height: 24px; padding-left: 3px; }
  .bar button { width: var(--w); height: 21px; border: 1px solid #8ba0bc; border-bottom: 0; border-radius: 2px 2px 0 0; box-shadow: inset 1px 1px #fff; background: linear-gradient(#c8dcf6, #dfecfd 60%, #c3d9f6); color: #1e4b93; text-align: center; padding: 2px 0 0; white-space: nowrap; }
  .bar .on { height: 24px; background: #f5f52a; border-color: #c9c95a; box-shadow: none; color: #000; }
  .bar .under { text-align: left; padding-left: 3px; }
  .pane { display: flex; gap: 6px; height: 174px; margin-right: 3px; padding: 8px 8px 9px; border: 1px solid #8ba0bc; background: #f3f8ff; box-shadow: 2px 1px #c6d8ef; }
  ::slotted(data-grid) { flex: 1; }
`, () => `
  <div class="bar" role="tablist">${[['Parametreler', 71], ['Stok Detayı', 64], ['Ödeme/Plan', 67], ['Açıklamalar', 62], ['Bağlı Stok', 55], ['Bağlı İş', 59, 'under'], ['Terminler', 53, 'on'], ['Adres', 37], ['Ek Bilgiler', 53], ['Seçenekler/DT', 78], ['Serbest Alanlar', 82], ['Gizle', 31]].map(([t, w, c = '']) => `<button role="tab" aria-selected="${c === 'on'}" class="${c}" style="--w:${w}px">${t}</button>`).join('')}</div>
  <div class="pane"><slot></slot></div>`);
define('action-panel', `
  :host { display: flex; flex-direction: column; gap: 5px; flex: none; width: 138px; padding: 10px 8px; border: 1px solid #6593cf; background: #e3efff; color: #000; }
  button { height: 26px; display: flex; align-items: center; gap: 3px; padding-left: 9px; border: 1px solid #7b9cc9; border-radius: 3px; background: linear-gradient(#e6f0fc 45%, #cfdff2 46%, #deebfb); box-shadow: inset 0 0 0 1px #f2f7ff; }
  .hot { border-color: #7d90a8; background: linear-gradient(#e9eef0 45%, #d9dcd4 46%, #eceee8); }
`, () => `<button class="hot"><ui-icon name="calBack"></ui-icon>Oluştur</button><button><ui-icon name="calBack"></ui-icon>Sevk Emri</button>`);

/* ---------- totals ---------- */
define('totals-card', `
  :host { display: block; border: 1px solid #6593cf; min-width: 0; --fh: 19px; }
  h3 { margin: 0; height: 19px; padding-left: 10px; border-bottom: 1px solid #6593cf; box-shadow: inset 1px 1px #fff; background: linear-gradient(#e3efff, #afcfff); font: inherit; line-height: 19px; color: #00156e; }
  .b { padding: 11px 8px 0 7px; }
`, el => `<h3>${attr(el, 'title-text')}</h3><div class="b"><slot></slot></div>`);
define('totals-row', `
  :host { display: grid; grid-template-columns: 204fr 168fr 226fr 226fr; max-width: 824px; height: 100px; }
  .s { display: flex; gap: 6px; }
`, () => {
  const card = (name, lw, a, b, white) => `<totals-card title-text="${name}" style="--lw:${lw}px">
    <form-field tot num ${white ? '' : 'ro'} label="Tutar" value="50.000,00"></form-field>
    <div class="s"><form-field tot num ro label="ÖTV/KDV" value=",00" style="flex:${a + lw}"></form-field><form-field tot num ro hint="KDV" value="10.000,00" style="flex:${b}"></form-field></div>
    <form-field tot num ${white ? '' : 'ro'} label="Toplam" value="60.000,00"></form-field></totals-card>`;
  return card('Normal', 49, 66, 66) + `<totals-card title-text="İndirimler" style="--lw:51px">
    <form-field tot num ro label="Otomatik"></form-field>
    <form-field num label="El ile" icons="dots"></form-field>
    <form-field tot num ro label="Toplam%" value="0,00"></form-field></totals-card>` + card('TL', 49, 70, 84) + card('İşlem', 49, 70, 84, true);
});

/* ---------- annotations over the window ---------- */
define('call-out', `
  :host { position: absolute; width: 24px; height: 24px; margin: -12px 0 0 -12px; border-radius: 50%; background: #f00; color: #fff; font: 17px/24px "Noto Sans", sans-serif; text-align: center; }
`, () => `<slot></slot>`);
define('note-layer', `
  :host { position: absolute; inset: 0; pointer-events: none; overflow: hidden; }
  .f { position: absolute; border: 3px solid #f00; }
  svg { position: absolute; }
`, () => {
  const frames = [[433, 184, 288, 20], [874, 181, 233, 24], [521, 355, 225, 20]];
  const calls = [[145, 93], [365, 271], [318, 193], [614, 317], [379, 477], [508, 364], [906, 42]];
  return frames.map(([x, y, w, h]) => `<div class="f" style="left:${x}px;top:${y}px;width:${w}px;height:${h}px"></div>`).join('')
    + calls.map(([x, y], i) => `<call-out style="left:${x}px;top:${y}px">${i + 1}</call-out>`).join('')
    + `<svg style="left:1240px;top:287px" width="5" height="5"><path d="M1 2.500h3M2.500 1v3" stroke="#000"/></svg>
    <svg style="left:1328px;top:298px" width="21" height="21"><path d="M10.500 1v1M10.500 3v1M10.500 10v1M10.500 16v1M10.500 18v1M1 10.500h1M3 10.500h1M17 10.500h1M19 10.500h1" stroke="#000"/></svg>`;
});

/* ---------- window ---------- */
define('order-window', `
  :host { display: block; position: relative; background: #b9d1ea; font: 11px "DejaVu Sans Condensed", "DejaVu Sans", sans-serif;
    --title-font: 12px/16px Roboto, sans-serif; --h1-font: bold 15px/21px "Noto Sans", sans-serif;
    --item-font: 12px/16px Roboto, sans-serif; --nav-font: bold 11px/30px "Noto Sans", sans-serif; }
  .c { margin: 0 6px 0 5px; background: #e3efff; padding-bottom: 4px; }
  .m { display: flex; margin: 5px 4px 0; }
  .vs { flex: none; width: 16px; display: flex; align-items: center; background: linear-gradient(90deg, transparent 6px, #fff 6px 8px, #e3efff 8px 9px, #c5dbf8 9px 10px, transparent 10px); }
  .vs svg { margin-left: 6px; }
  .r { flex: 1; min-width: 0; display: flex; flex-direction: column; }
  .hs { height: 16px; display: flex; justify-content: center; align-items: center; background: linear-gradient(transparent 7px, #fff 7px 9px, #d5e6fb 9px 11px, transparent 11px); }
  .g { height: 122px; --row-bg: #00ffff; --row-fg: #000; }
  .t { --row-bg: #316ac5; --row-fg: #fff; }
  totals-row { margin-top: 9px; }
  .e { height: 4px; }
`, () => `
  <title-bar></title-bar>
  <main class="c">
    <tool-bar></tool-bar>
    <order-form></order-form>
    <div class="m">
      <side-nav></side-nav>
      <div class="vs"><svg width="4" height="7"><path d="M4 0v7L0 3.500z" fill="#4a7ab8"/></svg></div>
      <div class="r">
        <data-grid class="g" source="lines"><grid-footer></grid-footer></data-grid>
        <div class="hs"><svg width="19" height="3"><path d="M0 1h19" stroke="#5c8ccb" stroke-width="2" stroke-dasharray="2 2"/></svg></div>
        <detail-tabs>
          <data-grid class="t" dotted source="terms"><grid-footer sub style="--thumb:293px"></grid-footer></data-grid>
          <action-panel></action-panel>
        </detail-tabs>
        <totals-row></totals-row>
      </div>
    </div>
  </main>
  <div class="e"></div>
  <note-layer></note-layer>`);
</script>
</body>
</html>
